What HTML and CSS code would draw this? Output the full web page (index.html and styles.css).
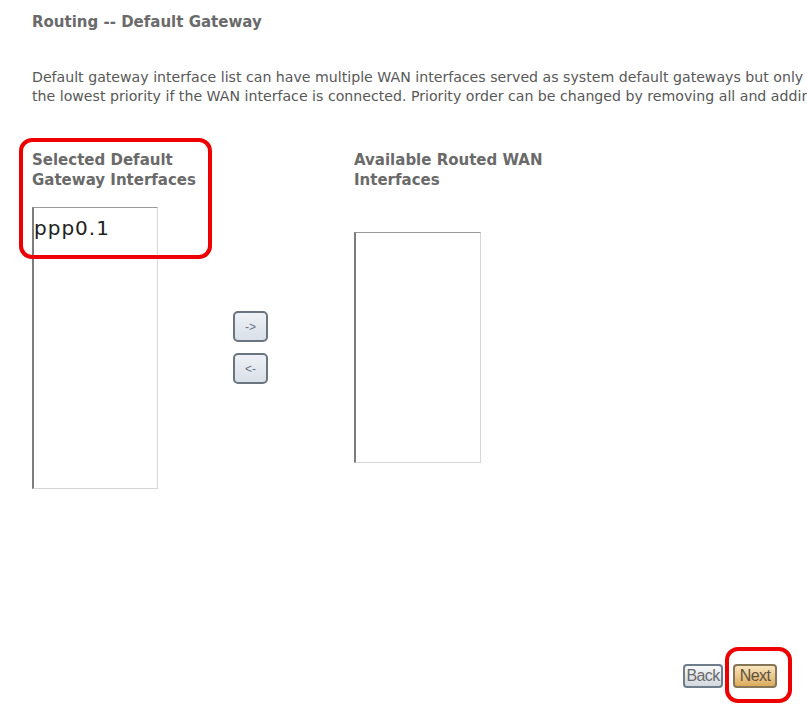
FILE: index.html
```html
<!DOCTYPE html>
<html>
<head>
<meta charset="utf-8">
<link rel="stylesheet" href="styles.css">
</head>
<body>
<div class="page">
  <h1 class="title">Routing -- Default Gateway</h1>
  <p class="desc">Default gateway interface list can have multiple WAN interfaces served as system default gateways but only<br>the lowest priority if the WAN interface is connected. Priority order can be changed by removing all and adding</p>
  <div class="lists">
    <div class="col col-left">
      <div class="label">Selected Default<br>Gateway Interfaces</div>
      <div class="listbox listbox-left"><div class="option">ppp0.1</div></div>
      <div class="mark mark-left"></div>
    </div>
    <div class="col col-mid">
      <button class="arrow">-&gt;</button>
      <button class="arrow">&lt;-</button>
    </div>
    <div class="col col-right">
      <div class="label">Available Routed WAN<br>Interfaces</div>
      <div class="listbox listbox-right"></div>
    </div>
  </div>
  <div class="footer">
    <button class="nav nav-back">Back</button>
    <button class="nav nav-next">Next</button>
    <div class="mark mark-next"></div>
  </div>
</div>
</body>
</html>
```

FILE: styles.css
```css
html, body {
  margin: 0;
  padding: 0;
  background: #ffffff;
  overflow: hidden;
}
.page {
  width: 807px;
  height: 715px;
  position: relative;
  padding: 0 0 0 32px;
  box-sizing: border-box;
  font-family: "DejaVu Sans", Verdana, sans-serif;
  color: #5a5a5a;
  overflow: hidden;
}
.title {
  margin: 0;
  padding-top: 12px;
  font-size: 15px;
  font-weight: bold;
  color: #6a6a6a;
  line-height: 20px;
}
.desc {
  margin: 0;
  padding-top: 36px;
  font-size: 14.15px;
  line-height: 19px;
  white-space: nowrap;
  color: #585858;
}
.lists {
  display: flex;
  margin-top: 44px;
}
.col { position: relative; }
.col-left { width: 201px; }
.col-mid {
  width: 121px;
  display: flex;
  flex-direction: column;
  align-items: flex-start;
  padding-top: 161px;
  gap: 11px;
}
.label {
  font-size: 15px;
  font-weight: bold;
  line-height: 20px;
  color: #6a6a6a;
}
.listbox {
  background: #fff;
  border-left: 2px solid #7d7d7d;
  border-top: 1px solid #9a9a9a;
  border-right: 1px solid #d6d6d6;
  border-bottom: 1px solid #d6d6d6;
  box-sizing: border-box;
}
.listbox-left {
  width: 126px;
  height: 282px;
  margin-top: 17px;
}
.listbox-right {
  width: 127px;
  height: 231px;
  margin-top: 42px;
}
.option {
  font-family: "DejaVu Sans", sans-serif;
  font-size: 20px;
  color: #222;
  padding: 8px 0 0 0;
  letter-spacing: 1px;
}
.arrow {
  width: 35px;
  height: 31px;
  border: 2px solid #6b7580;
  border-radius: 5px;
  background: linear-gradient(#eef2f7, #d9e0e8);
  color: #6b7280;
  font-family: "Liberation Sans", Arial, sans-serif;
  font-size: 12px;
  padding: 0;
}
.footer {
  position: absolute;
  right: 30px;
  top: 664px;
  display: flex;
  gap: 10px;
}
.nav {
  height: 24px;
  border: 2px solid #6e7d8c;
  border-radius: 4px;
  font-family: "Liberation Sans Narrow", "Liberation Sans", Arial, sans-serif;
  font-size: 16px;
  color: #6a6a6a;
  padding: 0;
  letter-spacing: -0.6px;
}
.nav-back {
  width: 40px;
  background: linear-gradient(#f7f8fa, #d3d9e0);
}
.nav-next {
  width: 44px;
  background: linear-gradient(#f9e6bd, #dcab5c);
  border-color: #85765a;
  color: #5e5140;
}
.mark {
  position: absolute;
  border: 4px solid #ee0000;
  border-radius: 13px;
  box-sizing: border-box;
}
.mark-left {
  left: -13px;
  top: -12px;
  width: 193px;
  height: 121px;
}
.mark-next {
  left: 42px;
  top: -17px;
  width: 67px;
  height: 56px;
}
```
